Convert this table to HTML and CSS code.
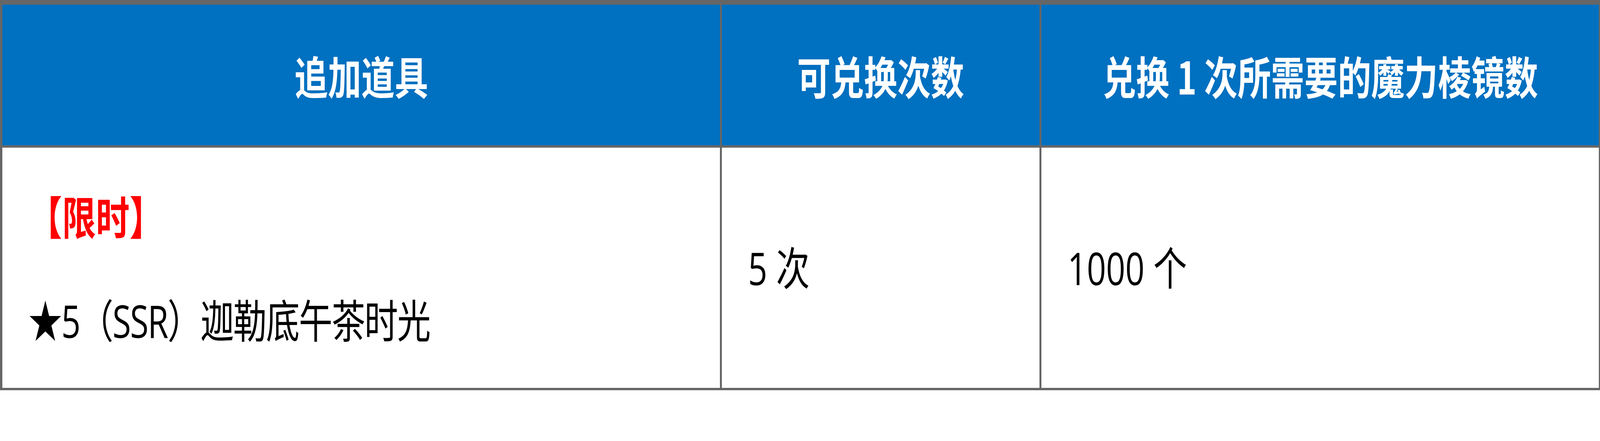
FILE: index.html
```html
<!DOCTYPE html>
<html lang="zh-CN">
<head>
<meta charset="utf-8">
<title>追加道具</title>
<link rel="stylesheet" href="styles.css">
</head>
<body>
<div class="table" role="table">
  <div class="th" role="columnheader"><span class="txt">追加道具</span></div>
  <div class="th sep" role="columnheader"><span class="txt">可兑换次数</span></div>
  <div class="th sep" role="columnheader"><span class="txt">兑换 1 次所需要的魔力棱镜数</span></div>
  <div class="td" role="cell">
    <p class="txt tag">【限时】</p>
    <p class="txt item">★5（SSR）迦勒底午茶时光</p>
  </div>
  <div class="td sep" role="cell"><p class="txt">5 次</p></div>
  <div class="td sep" role="cell"><p class="txt">1000 个</p></div>
</div>
</body>
</html>
```

FILE: styles.css
```css
html, body {
  margin: 0;
  padding: 0;
  background: #ffffff;
}

.table {
  display: grid;
  grid-template-columns: 2474fr 1101fr 1928fr;
  width: 100%;
  box-sizing: border-box;
  border-top: 12px solid #666666;
  border-left: 6px solid #666666;
  border-right: 3px solid #666666;
  border-bottom: 6px solid #666666;
}

/* text is sized for the 5512px-wide design and narrowed to the actual viewport width */
.txt {
  display: inline-block;
  white-space: nowrap;
  transform: scaleX(0.7431);
  transform: scaleX(calc(100vw / 5512px));
}

.th {
  box-sizing: border-box;
  min-width: 0;
  height: 366px;
  background: #0070c0;
  border-bottom: 6px solid #666666;
  display: flex;
  align-items: center;
  justify-content: center;
  color: #ffffff;
  font-family: "Noto Sans CJK SC", sans-serif;
  font-weight: 700;
  font-size: 115px;
  line-height: 1.2;
}

.th .txt {
  transform-origin: center center;
}

.sep {
  border-left: 5px solid #666666;
}

.td {
  box-sizing: border-box;
  min-width: 0;
  height: 615px;
  display: flex;
  flex-direction: column;
  justify-content: center;
  align-items: flex-start;
  gap: 119px;
  padding-left: 1.63vw;
  font-family: "Open Sans", "Noto Sans CJK SC", sans-serif;
  font-size: 116px;
  line-height: 151px;
  color: #000000;
}

.td p {
  margin: 0;
  transform-origin: left center;
}

.tag {
  color: #ff0000;
  font-weight: 700;
  font-family: "Noto Sans CJK SC", sans-serif;
}

.item {
  letter-spacing: -3px;
}
```
